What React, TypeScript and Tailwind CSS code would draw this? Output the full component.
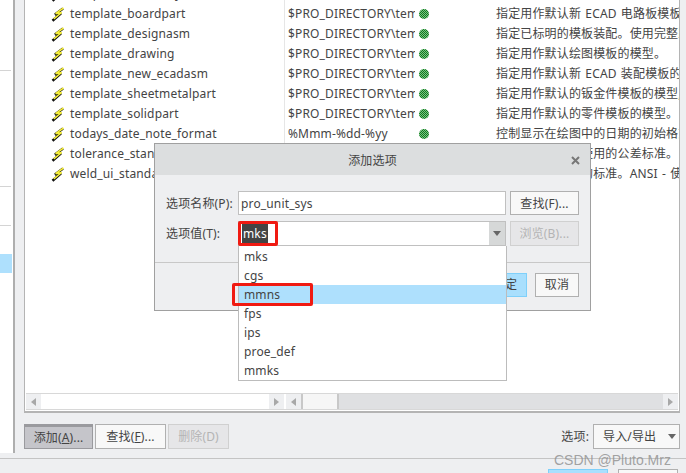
const FONT = "font-['Noto_Sans','Noto_Sans_CJK_SC',sans-serif]";

const rows = [
  ["template_assembly", "$PRO_DIRECTORY\\templates", "指定用作默认装配模板的模型。"],
  ["template_boardpart", "$PRO_DIRECTORY\\templates", "指定用作默认新 ECAD 电路板模板的模型。"],
  ["template_designasm", "$PRO_DIRECTORY\\templates", "指定已标明的模板装配。使用完整路径。"],
  ["template_drawing", "$PRO_DIRECTORY\\templates", "指定用作默认绘图模板的模型。"],
  ["template_new_ecadasm", "$PRO_DIRECTORY\\templates", "指定用作默认新 ECAD 装配模板的模型。"],
  ["template_sheetmetalpart", "$PRO_DIRECTORY\\templates", "指定用作默认的钣金件模板的模型,用于创建。"],
  ["template_solidpart", "$PRO_DIRECTORY\\templates", "指定用作默认的零件模板的模型。"],
  ["todays_date_note_format", "%Mmm-%dd-%yy", "控制显示在绘图中的日期的初始格式。"],
  ["tolerance_standard", "", "指定新模型中所使用的公差标准。"],
  ["weld_ui_standard", "", "设置焊接的默认的标准。ANSI - 使用美国标准。"],
];

const options = ["mks", "cgs", "mmns", "fps", "ips", "proe_def", "mmks"];

function Bolt() {
  return (
    <svg width="14" height="15" viewBox="0 0 14 15" className="shrink-0">
      <path d="M12 1.5 4 7.5l6-1.2-8.5 7.4" fill="none" stroke="#111" strokeWidth="2.6" strokeLinejoin="bevel" />
      <path d="M12.5 1 4.6 6.7l6-1.2-7.8 6.4" fill="none" stroke="#f7f03a" strokeWidth="1.6" strokeLinejoin="bevel" />
    </svg>
  );
}

function Dot({ id }: { id: string }) {
  return (
    <svg width="10" height="10" viewBox="0 0 10 10">
      <defs>
        <pattern id={id} width="2" height="2" patternUnits="userSpaceOnUse">
          <rect width="2" height="2" fill="#7cc283" />
          <rect width="1" height="1" fill="#0c7a1e" />
          <rect x="1" y="1" width="1" height="1" fill="#0c7a1e" />
        </pattern>
      </defs>
      <circle cx="5" cy="5" r="5" fill={`url(#${id})`} />
    </svg>
  );
}

function Arrow({ dir }: { dir: "left" | "right" }) {
  return (
    <span className="flex h-full w-[15px] shrink-0 items-center justify-center bg-[#eeeff1]">
      <svg width="5" height="8" viewBox="0 0 5 8">
        <path d={dir === "left" ? "M5 0v8L0 4z" : "M0 0v8l5-4z"} fill="#a8a8a8" />
      </svg>
    </span>
  );
}

function Caret() {
  return (
    <svg width="8" height="5" viewBox="0 0 8 5">
      <path d="M0 0h8L4 5z" fill="#666" />
    </svg>
  );
}

export default function App() {
  return (
    <div className={`${FONT} relative h-[473px] w-[686px] overflow-hidden bg-[#eeeff1] text-[12px] tracking-[0.15px] text-[#444]`}>
      <div className="box-content flex h-[458px] border-b border-[#c4c4c4]">
        {/* left tree, only its edge is on screen */}
        <div className="flex h-[453px] w-[15px] shrink-0 flex-col border-r-2 border-[#aeaeae] bg-white">
          <div className="mt-[70px] h-px w-[11px] bg-[#d4d4d4]" />
          <div className="mt-[115px] h-px w-[11px] bg-[#d4d4d4]" />
          <div className="mt-[38px] h-px w-[11px] bg-[#d4d4d4]" />
          <div className="mt-[28px] h-[19px] w-[12px] bg-[#aee0fd]" />
        </div>

        <div className="ml-[9px] flex w-[656px] shrink-0 flex-col">
          {/* options table */}
          <div className="flex h-[413px] shrink-0 flex-col border-x border-b-2 border-[#b4b4b4] bg-white">
            <div className="relative flex-1 overflow-hidden">
              <div className="-mt-[16px] flex flex-col">
                {rows.map((r, i) => (
                  <div key={r[0]} className="flex h-[20px] items-center whitespace-nowrap">
                    <div className="flex h-full w-[260px] shrink-0 items-center border-r border-[#e6e6e6] pl-[26px]">
                      <Bolt />
                      <span className="ml-[5px]">{r[0]}</span>
                    </div>
                    <div className="flex h-full w-[130px] shrink-0 items-center overflow-hidden pl-[3px]">{r[1]}</div>
                    <div className="flex h-full w-[21px] shrink-0 items-center pl-[4px]">
                      <Dot id={`dot${i}`} />
                    </div>
                    <div className="w-[243px] shrink-0 overflow-hidden pl-[60px] [word-spacing:1px]">{r[2]}</div>
                  </div>
                ))}
              </div>
            </div>
            {/* scrollbars */}
            <div className="mx-[1px] mb-[1px] flex h-[17px] shrink-0 gap-[2px] border-y border-[#d8d8d8] bg-white">
              <div className="flex w-[258px] shrink-0 justify-between">
                <Arrow dir="left" />
                <Arrow dir="right" />
              </div>
              <div className="flex flex-1 bg-[#dfe0e2]">
                <Arrow dir="left" />
                <div className="w-[38px] border-x-2 border-[#c8c8c8] bg-[#f6f6f6]" />
                <div className="flex-1" />
                <Arrow dir="right" />
              </div>
            </div>
          </div>

          {/* toolbar */}
          <div className="mt-[11px] flex h-[25px] items-stretch">
            <button className="w-[69px] border border-t-[3px] border-[#9a9a9e] bg-[#c5c5ca]">添加(<span className="underline">A</span>)...</button>
            <button className="ml-[2px] w-[71px] border border-[#b0b0b0] bg-[#f8f8f8]">查找(<span className="underline">F</span>)...</button>
            <button className="ml-[2px] w-[61px] border border-[#d0d0d0] bg-[#e6e6e8] text-[#b4b4b4]">删除(D)</button>
            <span className="ml-auto flex items-center">选项:</span>
            <div className="ml-[4px] flex w-[87px] items-center justify-between border border-[#b0b0b0] bg-[#f8f8f8] pl-[9px] pr-[3px]">
              导入/导出
              <Caret />
            </div>
          </div>
        </div>
      </div>

      {/* footer buttons, cut by the window */}
      <div className="flex justify-end gap-[10px] pr-[8px] pt-[10px]">
        <div className="h-[20px] w-[60px] border border-[#7fd0fa] bg-[#a9dffd]" />
        <div className="h-[20px] w-[60px] border border-[#b0b0b0] bg-[#f8f8f8]" />
      </div>

      <span className="absolute left-[554px] top-[450px] font-['Liberation_Sans',sans-serif] text-[14px] tracking-normal text-[#8d8d8d]/80">CSDN @Pluto.Mrz</span>

      {/* add option dialog */}
      <div className="absolute left-[154px] top-[143px] flex h-[168px] w-[437px] flex-col border border-[#a0a0a0] bg-[#eeeff1]">
        <div className="relative flex h-[31px] shrink-0 items-center justify-center bg-[#dcdedf] pt-[2px]">
          添加选项
          <svg width="9" height="9" viewBox="0 0 9 9" className="absolute right-[10px] top-[12px]">
            <path d="M1 1l7 7M8 1 1 8" stroke="#777" strokeWidth="2" />
          </svg>
        </div>
        <div className="mt-[16px] flex h-[24px] items-stretch pl-[11px]">
          <span className="flex w-[72px] items-center whitespace-nowrap pt-[2px]">选项名称(P):</span>
          <div className="flex w-[268px] items-center border border-[#c0c0c0] bg-white pl-[2px] pt-[2px]">pro_unit_sys</div>
          <button className="ml-[4px] w-[69px] border border-[#b0b0b0] bg-[#f8f8f8] pt-[2px]">查找(F)...</button>
        </div>
        <div className="mt-[6px] flex h-[25px] items-stretch pl-[11px]">
          <span className="flex w-[72px] items-center whitespace-nowrap pt-[1px]">选项值(T):</span>
          <div className="flex w-[268px] items-center justify-between border border-[#c0c0c0] bg-white pl-[3px]">
            <span className="bg-[#444] px-[1px] leading-[19px] text-white">mks</span>
            <span className="flex h-full w-[16px] items-center justify-center bg-[#d6d8d8]">
              <Caret />
            </span>
          </div>
          <button className="ml-[4px] w-[69px] border border-[#d0d0d0] bg-[#e6e6e8] pt-[1px] text-[#b4b4b4]">浏览(B)...</button>
        </div>
        <div className="mt-[16px] h-px bg-[#c8c8c8]" />
        <div className="mt-[10px] flex h-[24px] justify-end gap-[8px] pr-[11px]">
          <button className="w-[44px] border border-[#7fd0fa] bg-[#a9dffd]">确定</button>
          <button className="w-[44px] border border-[#b0b0b0] bg-[#f8f8f8]">取消</button>
        </div>
      </div>

      {/* open dropdown */}
      <div className="absolute left-[238px] top-[246px] flex h-[135px] w-[269px] flex-col border border-t-0 border-[#bcbcbc] bg-white pt-[1px]">
        {options.map((o) => (
          <div key={o} className={`flex h-[19px] items-center pl-[5px] ${o === "mmns" ? "bg-[#aee0fd]" : ""}`}>{o}</div>
        ))}
      </div>

      {/* red annotation boxes */}
      <div className="absolute left-[238px] top-[221px] h-[25px] w-[40px] rounded-[2px] border-[3px] border-[#f01a12]" />
      <div className="absolute left-[232px] top-[283px] h-[23px] w-[81px] rounded-[2px] border-[3px] border-[#f01a12]" />
    </div>
  );
}
